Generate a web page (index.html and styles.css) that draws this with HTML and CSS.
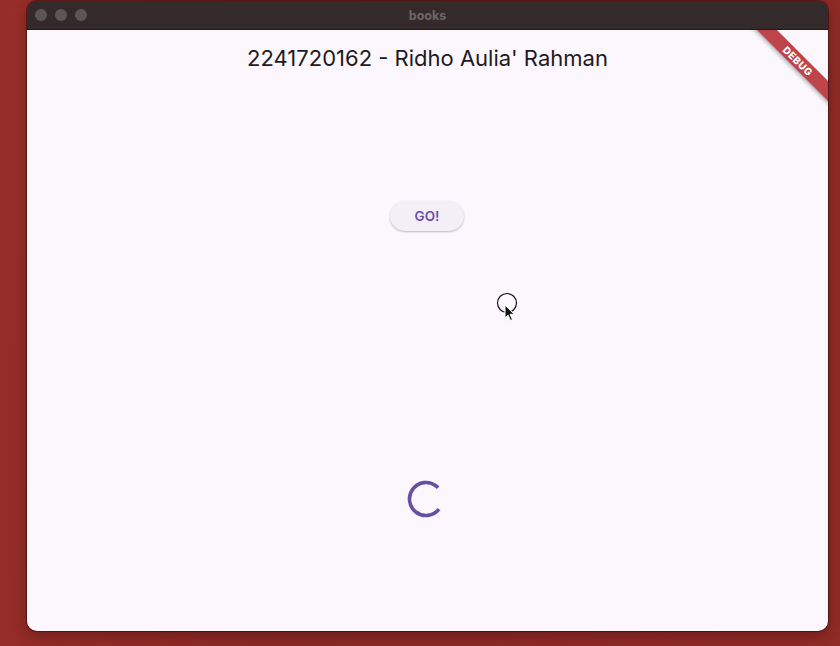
FILE: index.html
```html
<!DOCTYPE html>
<html>
<head>
<meta charset="utf-8">
<link rel="stylesheet" href="styles.css">
</head>
<body>
<div class="desktop">
  <div class="window">
    <div class="titlebar">
      <div class="lights">
        <span class="light"></span><span class="light"></span><span class="light"></span>
      </div>
      <div class="wtitle">books</div>
    </div>
    <div class="content">
      <h1 class="heading">2241720162 - Ridho Aulia' Rahman</h1>
      <button class="go">GO!</button>
      <svg class="spinner" width="40" height="40" viewBox="0 0 40 40">
        <circle cx="20" cy="20" r="16.5" fill="none" stroke="#6750a4" stroke-width="3.6" stroke-dasharray="80 200" transform="rotate(38 20 20)"/>
      </svg>
      <div class="banner">DEBUG</div>
      <svg class="cursor" width="30" height="34" viewBox="0 0 30 34">
        <circle cx="11" cy="11" r="9.5" fill="none" stroke="#111" stroke-width="1.2"/>
        <path d="M9 13 L9 26 L12 23 L14.5 28.5 L16.5 27.6 L14 22.3 L18.2 22.3 Z" fill="#111" stroke="#fff" stroke-width="1"/>
      </svg>
    </div>
  </div>
</div>
</body>
</html>
```
FILE: styles.css
```css
html, body {
  margin: 0;
  padding: 0;
}
body {
  width: 840px;
  height: 646px;
  overflow: hidden;
  font-family: Inter, "Liberation Sans", sans-serif;
}
.desktop {
  width: 840px;
  height: 646px;
  background:
    linear-gradient(100deg, rgba(160,48,42,0.6) 0%, rgba(130,36,32,0.2) 40%, rgba(150,44,40,0.4) 100%),
    #8c2a26;
  padding: 1px 0 0 27px;
  box-sizing: border-box;
}
.window {
  width: 801px;
  height: 630px;
  border-radius: 10px;
  overflow: hidden;
  display: flex;
  flex-direction: column;
  box-shadow: 0 0 0 1px rgba(40,10,10,0.5), 0 4px 14px rgba(40,0,0,0.35);
}
.titlebar {
  height: 28px;
  background: #352a2b;
  border-bottom: 1px solid #1f1a1b;
  position: relative;
  display: flex;
  align-items: center;
  justify-content: center;
  flex: none;
}
.lights {
  position: absolute;
  left: 8px;
  top: 8px;
  display: flex;
  gap: 8px;
}
.light {
  width: 12px;
  height: 12px;
  border-radius: 50%;
  background: #5e5556;
}
.wtitle {
  color: #6f6667;
  font-size: 12.5px;
  font-weight: 700;
  font-family: Inter, "Liberation Sans", sans-serif;
}
.content {
  flex: 1;
  background: #fcf6fd;
  position: relative;
  overflow: hidden;
  display: flex;
  flex-direction: column;
  align-items: center;
}
.heading {
  margin: 14px 0 0;
  font-size: 22px;
  font-weight: 400;
  color: #1d1b20;
  line-height: 28px;
  letter-spacing: 0;
}
.go {
  margin-top: 129px;
  width: 74px;
  height: 30px;
  border: none;
  border-radius: 15px;
  background: #f4eff6;
  color: #6750a4;
  font-family: Inter, "Liberation Sans", sans-serif;
  font-size: 13.5px;
  font-weight: 600;
  box-shadow: 0 1px 2px rgba(0,0,0,0.25);
  padding: 0;
  margin-left: -1px;
}
.spinner {
  margin-top: 248px;
  margin-left: -3px;
}
.banner {
  position: absolute;
  width: 120px;
  height: 14px;
  right: -30px;
  top: 24px;
  transform: rotate(45deg);
  background: #bd4448;
  color: #fff;
  font-size: 10px;
  font-weight: 800;
  line-height: 14px;
  text-align: center;
  letter-spacing: 0.5px;
  box-shadow: 0 2px 4px rgba(0,0,0,0.3);
}
.cursor {
  position: absolute;
  left: 469px;
  top: 262px;
}
```
